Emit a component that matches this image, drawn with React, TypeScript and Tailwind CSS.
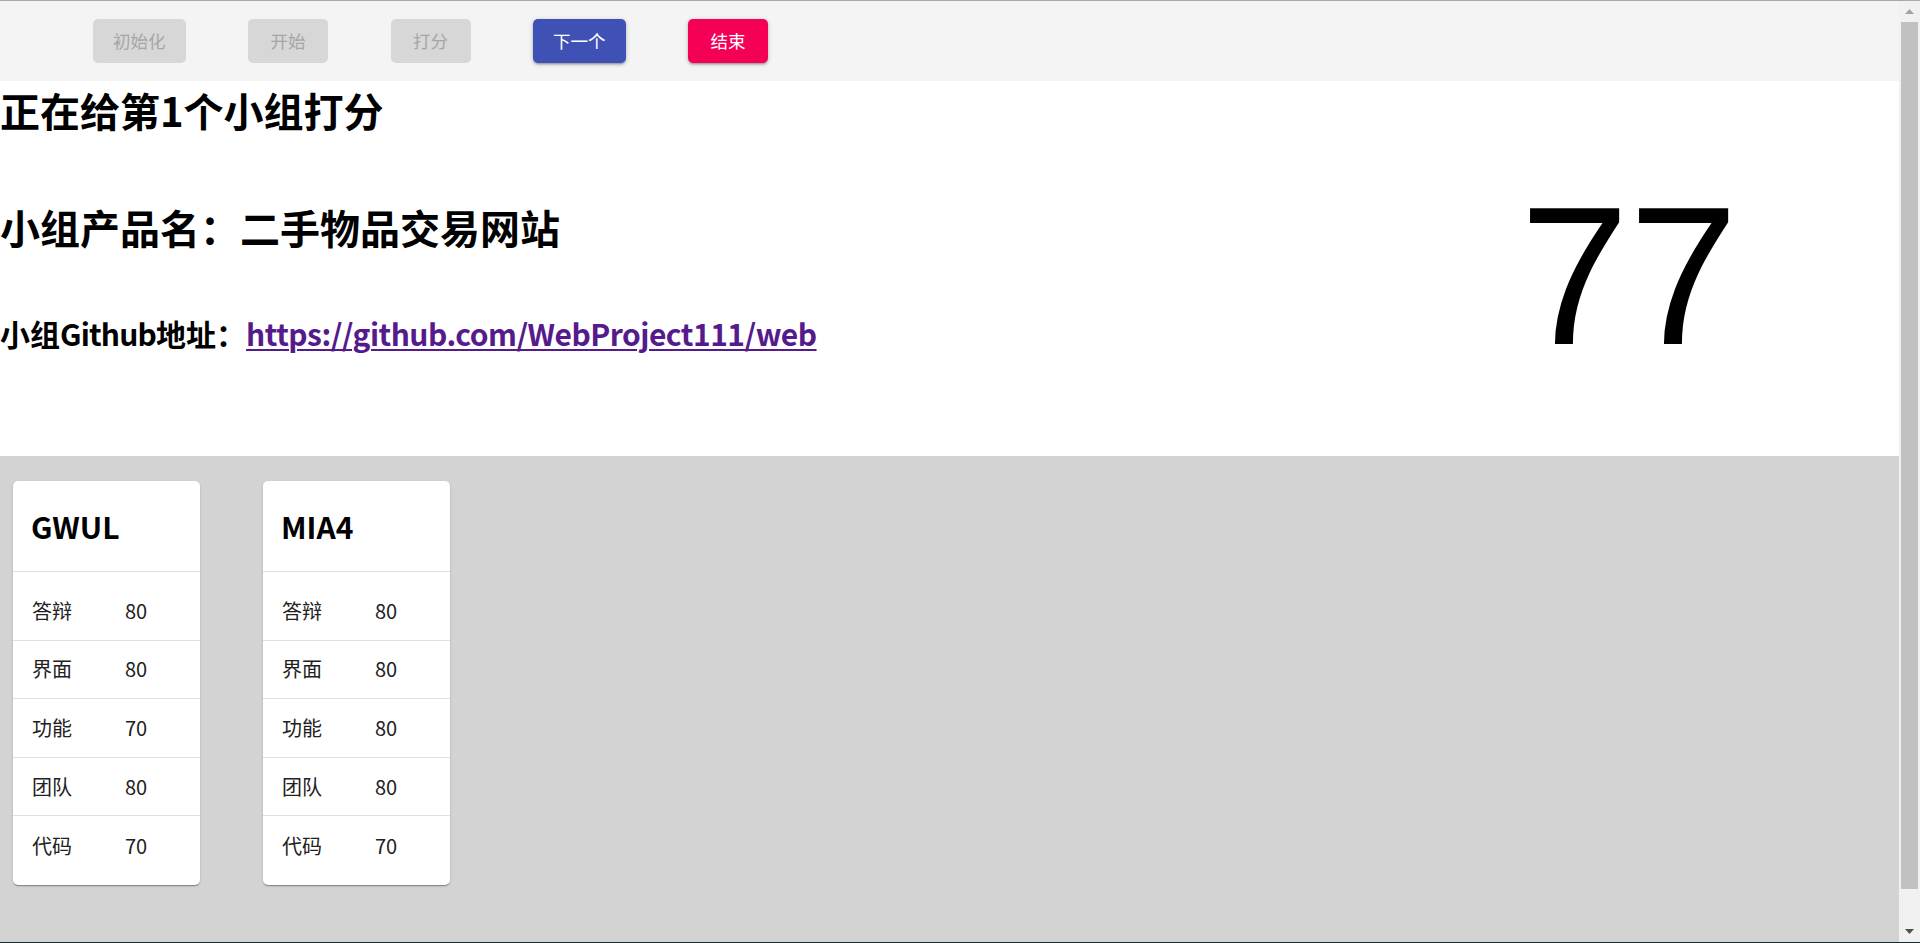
import React from "react";

const cards = [
  {
    name: "GWUL",
    rows: [
      ["答辩", "80"],
      ["界面", "80"],
      ["功能", "70"],
      ["团队", "80"],
      ["代码", "70"],
    ],
  },
  {
    name: "MIA4",
    rows: [
      ["答辩", "80"],
      ["界面", "80"],
      ["功能", "80"],
      ["团队", "80"],
      ["代码", "70"],
    ],
  },
];

function DisabledButton({ label }: { label: string }) {
  return (
    <div className="h-[44px] min-w-[80px] px-[20px] rounded-[5px] bg-[#d7d7d7] text-[#a6a6a6] text-[17.5px] flex items-center justify-center">
      {label}
    </div>
  );
}

function ScoreCard({ name, rows }: { name: string; rows: string[][] }) {
  return (
    <div className="w-[187px] bg-white rounded-[5px] shadow-[0_2px_1px_-1px_rgba(0,0,0,0.2),0_1px_1px_0_rgba(0,0,0,0.14),0_1px_3px_0_rgba(0,0,0,0.12)]">
      <div className="h-[91px] px-[18px] flex items-center border-b border-[#e0e0e0] text-[30px] font-bold text-black">
        {name}
      </div>
      <div className="py-[10px]">
        {rows.map(([label, value], i) => (
          <div
            key={label}
            className={
              "h-[58.6px] px-[19px] flex items-center text-[20px] text-[#212121] " +
              (i < rows.length - 1 ? "border-b border-[#e0e0e0]" : "")
            }
          >
            <span className="w-[93px]">{label}</span>
            <span>{value}</span>
          </div>
        ))}
      </div>
    </div>
  );
}

export default function App() {
  return (
    <div className="w-[1920px] h-[943px] flex flex-col overflow-hidden bg-white font-['Noto_Sans_CJK_SC','Microsoft_YaHei',sans-serif]">
      <div className="h-px bg-[#a9a9a9] shrink-0" />
      <div className="flex flex-1 min-h-0">
        <div className="flex-1 flex flex-col min-w-0">
          {/* top bar */}
          <div className="h-[80px] shrink-0 bg-[#f4f4f4] flex items-start pt-[18px] pl-[93px] gap-[62.5px]">
            <DisabledButton label="初始化" />
            <DisabledButton label="开始" />
            <DisabledButton label="打分" />
            <div className="h-[44px] min-w-[80px] px-[20px] rounded-[5px] bg-[#3f51b5] text-white text-[17.5px] flex items-center justify-center shadow-[0_1px_5px_0_rgba(0,0,0,0.2),0_2px_2px_0_rgba(0,0,0,0.14),0_3px_1px_-2px_rgba(0,0,0,0.12)]">
              下一个
            </div>
            <div className="h-[44px] min-w-[80px] px-[20px] rounded-[5px] bg-[#f50057] text-white text-[17.5px] flex items-center justify-center shadow-[0_1px_5px_0_rgba(0,0,0,0.2),0_2px_2px_0_rgba(0,0,0,0.14),0_3px_1px_-2px_rgba(0,0,0,0.12)]">
              结束
            </div>
          </div>

          {/* info section */}
          <div className="h-[375px] shrink-0 bg-white flex">
            <div className="w-[1520px] shrink-0">
              <h1 className="text-[40px] leading-[58px] font-bold text-black">
                正在给第1个小组打分
              </h1>
              <h1 className="mt-[59px] text-[40px] leading-[58px] font-bold text-black">
                小组产品名：二手物品交易网站
              </h1>
              <h2 className="mt-[55px] text-[30px] leading-[44px] font-bold text-black">
                小组<span className="tracking-[-0.8px]">Github</span>地址：
                <a
                  href="#"
                  className="text-[#551a8b] underline underline-offset-[3px] decoration-[2px] tracking-[-0.5px]"
                >
                  https://github.com/WebProject111/web
                </a>
              </h2>
            </div>
            <div className="mt-[98px] text-[196px] leading-[196px] text-black font-['Liberation_Sans',Arial,sans-serif]">
              77
            </div>
          </div>

          {/* cards */}
          <div className="flex-1 bg-[#d3d3d3] pt-[25px] pl-[13px] flex items-start gap-[63px]">
            {cards.map((c) => (
              <ScoreCard key={c.name} name={c.name} rows={c.rows} />
            ))}
          </div>
        </div>

        {/* scrollbar */}
        <div className="w-[21px] shrink-0 bg-[#f1f1f1] flex flex-col items-center">
          <div className="h-[21px] w-full flex items-center justify-center">
            <svg width="9" height="5" viewBox="0 0 9 5">
              <path d="M0 5 L4.5 0 L9 5 Z" fill="#a3a3a3" />
            </svg>
          </div>
          <div className="h-[867px] w-[17px] bg-[#c1c1c1]" />
          <div className="flex-1" />
          <div className="h-[21px] w-full flex items-center justify-center">
            <svg width="9" height="5" viewBox="0 0 9 5">
              <path d="M0 0 L9 0 L4.5 5 Z" fill="#505050" />
            </svg>
          </div>
        </div>
      </div>
      <div className="h-px bg-[#1d2a30] shrink-0" />
    </div>
  );
}
